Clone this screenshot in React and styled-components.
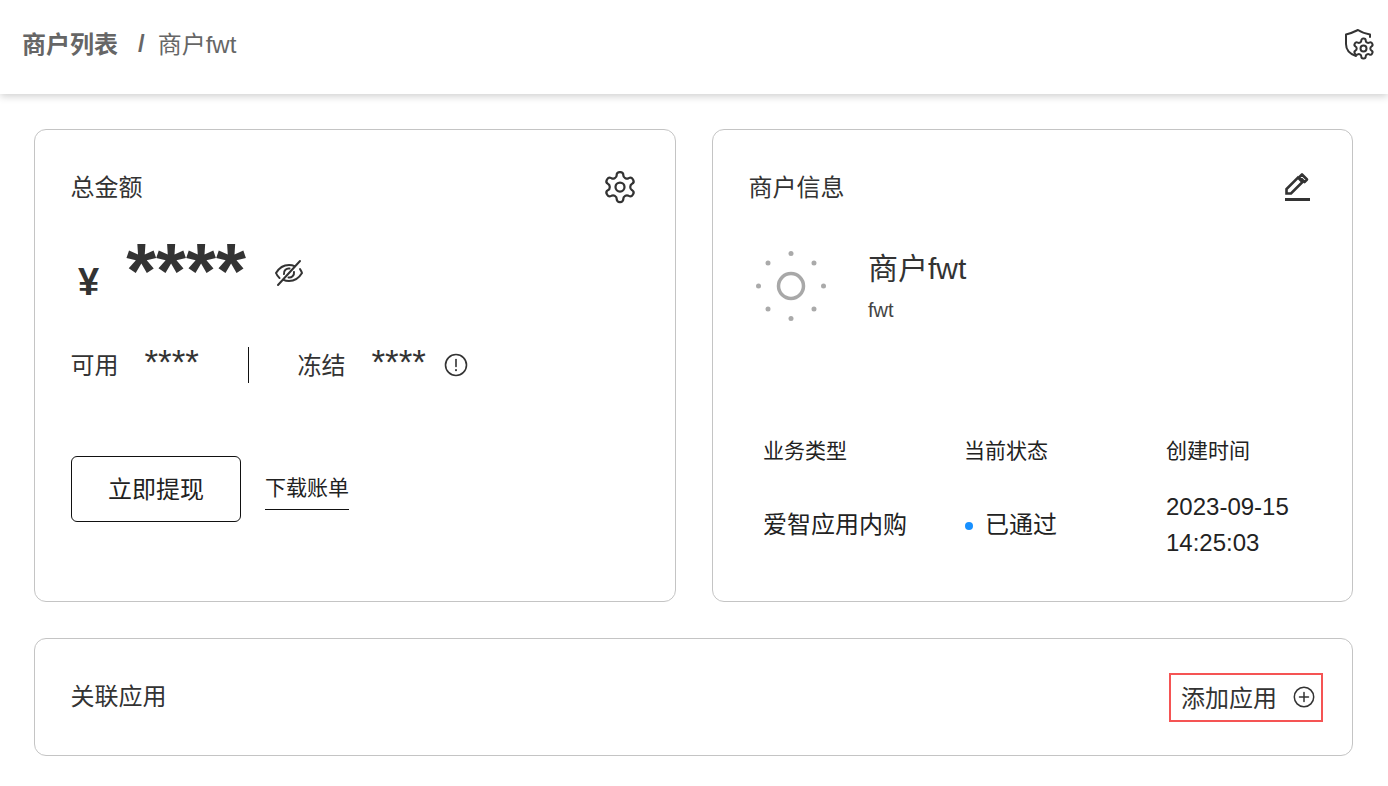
import React from "react";
import styled, { createGlobalStyle } from "styled-components";

const Global = createGlobalStyle`
  html, body { margin: 0; padding: 0; background: #fff; }
  body { font-family: "Liberation Sans", "Noto Sans CJK SC", sans-serif; color: #333; }
  * { box-sizing: border-box; }
`;

const Page = styled.div`
  width: 1388px;
  height: 786px;
  overflow: hidden;
`;

const Header = styled.header`
  height: 94px;
  padding: 0 12px 6px 22px;
  display: flex;
  align-items: center;
  justify-content: space-between;
  background: #fff;
  box-shadow: 0 2px 8px rgba(0, 0, 0, 0.2);
`;

const Crumbs = styled.div`
  display: flex;
  align-items: center;
  margin-bottom: 4px;
  font-size: 24px;
  color: #666;
`;

const CrumbRoot = styled.span`
  font-weight: 700;
`;

const CrumbSep = styled.span`
  margin: 3px 13px 0 20px;
  font-weight: 700;
`;

const Content = styled.main`
  padding: 35px 35px 0 34px;
  display: grid;
  grid-template-columns: 642px 641px;
  grid-template-rows: 473px 118px;
  gap: 36px;
`;

const Card = styled.section`
  border: 1px solid #c4c4c4;
  border-radius: 12px;
  padding: 36px;
  grid-column: ${(p) => (p.$wide ? "1 / 3" : "auto")};
`;

const CardHead = styled.div`
  display: flex;
  align-items: center;
  justify-content: space-between;
  height: 44px;
  margin-right: ${(p) => p.$inset}px;
`;

const CardTitle = styled.h2`
  margin: 0 0 0 -0.5px;
  font-size: 24px;
  font-weight: 400;
  line-height: 44px;
  color: #333;
`;

const HeadIcon = styled.span`
  display: flex;
  margin-bottom: 2px;
`;

const Amount = styled.div`
  display: flex;
  align-items: flex-start;
  height: 88px;
  margin-top: 29px;
  padding-left: 7px;
`;

const Yen = styled.span`
  margin-top: 21px;
  font-size: 38px;
  font-weight: 700;
  line-height: 44px;
  color: #333;
`;

const Stars = styled.span`
  margin: 2px 0 0 27px;
  font-size: 77px;
  font-weight: 700;
  line-height: 60px;
  color: #333;
`;

const EyeButton = styled.span`
  display: flex;
  margin: 18px 0 0 27px;
`;

const Balances = styled.div`
  display: flex;
  align-items: center;
  height: 36px;
  margin-top: 18px;
  margin-left: -0.5px;
  font-size: 24px;
  color: #333;
`;

const BalanceValue = styled.span`
  margin-left: 26px;
  font-size: 35px;
  line-height: 36px;
  position: relative;
  top: -1px;
`;

const BalanceDivider = styled.i`
  width: 1px;
  height: 36px;
  margin: 4px 48px 0 49.5px;
  background: #111;
`;

const InfoIcon = styled.span`
  display: flex;
  margin: 4px 0 0 18px;
`;

const Actions = styled.div`
  display: flex;
  align-items: center;
  margin-top: 75px;
  gap: 24px;
`;

const PrimaryButton = styled.button`
  width: 170px;
  height: 66px;
  padding: 0 0 3px;
  border: 1px solid #111;
  border-radius: 6px;
  background: #fff;
  color: #222;
  font: inherit;
  font-size: 24px;
`;

const TextLink = styled.a`
  display: block;
  padding: 2px 0 4px;
  border-bottom: 1px solid #111;
  font-size: 21px;
  line-height: 34px;
  color: #222;
`;

const Profile = styled.div`
  display: flex;
  margin-top: 38px;
  padding-left: 6px;
`;

const Avatar = styled.div`
  width: 72px;
  height: 72px;
  flex: none;
  margin-top: 2px;
  filter: blur(0.5px);
`;

const ProfileText = styled.div`
  margin: 1px 0 0 41px;
`;

const ProfileName = styled.div`
  font-size: 30px;
  line-height: 40px;
  color: #333;
`;

const ProfileCode = styled.div`
  margin-top: 8px;
  font-size: 20px;
  line-height: 26px;
  color: #444;
`;

const InfoGrid = styled.div`
  display: grid;
  grid-template-columns: 201px 202px 1fr;
  margin-top: 114px;
  padding-left: 14px;
`;

const InfoLabel = styled.div`
  font-size: 21px;
  line-height: 28px;
  color: #222;
`;

const InfoValue = styled.div`
  display: flex;
  align-items: center;
  height: 72px;
  margin-top: 24px;
  font-size: 24px;
  line-height: 36px;
  color: #222;
`;

const Dot = styled.i`
  width: 8px;
  height: 8px;
  margin: 2px 12px 0 1px;
  border-radius: 50%;
  background: #1890ff;
`;

const AddButton = styled.div`
  display: flex;
  align-items: center;
  width: 154px;
  height: 49px;
  margin-right: -7px;
  padding: 0 0 2px 10px;
  border: 2px solid #f55454;
  font-size: 24px;
  color: #333;
`;

const AddIcon = styled.span`
  display: flex;
  margin: 2px 0 0 16px;
`;

const BottomHead = styled.div`
  display: flex;
  align-items: center;
  justify-content: space-between;
  height: 44px;
`;

const GEAR =
  "M12.220 2h-.440a2 2 0 0 0-2 2v.180a2 2 0 0 1-1 1.730l-.430.250a2 2 0 0 1-2 0l-.150-.080a2 2 0 0 0-2.730.730l-.220.380a2 2 0 0 0 .730 2.730l.150.100a2 2 0 0 1 1 1.720v.510a2 2 0 0 1-1 1.740l-.150.090a2 2 0 0 0-.730 2.730l.220.380a2 2 0 0 0 2.730.730l.150-.080a2 2 0 0 1 2 0l.430.250a2 2 0 0 1 1 1.730V20a2 2 0 0 0 2 2h.440a2 2 0 0 0 2-2v-.180a2 2 0 0 1 1-1.730l.430-.250a2 2 0 0 1 2 0l.150.080a2 2 0 0 0 2.730-.730l.220-.390a2 2 0 0 0-.730-2.730l-.150-.080a2 2 0 0 1-1-1.740v-.500a2 2 0 0 1 1-1.740l.150-.090a2 2 0 0 0 .730-2.730l-.220-.380a2 2 0 0 0-2.730-.730l-.150.080a2 2 0 0 1-2 0l-.430-.250a2 2 0 0 1-1-1.730V4a2 2 0 0 0-2-2z";

function ShieldGear() {
  return (
    <svg width="32" height="32" viewBox="0 0 32 32" fill="none" stroke="#333" strokeWidth="2" strokeLinecap="round" strokeLinejoin="round">
      <path d="M12 28C6 26 2 22 2 16V6.500C6 5.500 10 4 14 2c3 2 7 3.500 12 4.500V9" />
      <g transform="translate(7.500 8.500)">
        <path d={GEAR} />
        <circle cx="12" cy="12" r="3" />
      </g>
    </svg>
  );
}

function Gear() {
  return (
    <svg width="36" height="36" viewBox="0 0 24 24" fill="none" stroke="#333" strokeWidth="1.500" strokeLinecap="round" strokeLinejoin="round">
      <path d={GEAR} />
      <circle cx="12" cy="12" r="3" />
    </svg>
  );
}

function Pencil() {
  return (
    <svg width="32" height="32" viewBox="0 0 32 32" fill="none" stroke="#333">
      <path d="M5.500 22.500V18L17 6.500l4.500 4.500L10 22.500z" strokeWidth="2.600" strokeLinejoin="miter" />
      <path d="M21 3.500l5 5-2.500 2.500-5-5z" strokeWidth="2.600" strokeLinejoin="round" />
      <path d="M4 28.500h25" strokeWidth="3" />
    </svg>
  );
}

function EyeOff() {
  return (
    <svg width="32" height="32" viewBox="0 0 32 32" fill="none" stroke="#333" strokeWidth="2" strokeLinecap="round" strokeLinejoin="round">
      <path d="M3 16c3-5 7.500-8 13-8 2 0 4 .400 5.500 1.200M27 12c.800 1.200 1.500 2.500 2 4-3 5-7.500 8-13 8-2 0-4-.400-5.500-1.200M6.500 21c-1.500-1.300-2.700-3-3.500-5" />
      <path d="M11 17c-.500-3.500 2.500-6 5.500-5.500M21 15c.500 3.500-2.500 6-5.500 5.500" />
      <path d="M5 28L27 4" />
    </svg>
  );
}

function Info() {
  return (
    <svg width="24" height="24" viewBox="0 0 24 24" fill="none" stroke="#333" strokeWidth="1.600" strokeLinecap="round">
      <circle cx="12" cy="12" r="10.500" />
      <path d="M12 6.500v7" />
      <path d="M12 17v.300" strokeWidth="2" />
    </svg>
  );
}

function Plus() {
  return (
    <svg width="22" height="22" viewBox="0 0 22 22" fill="none" stroke="#333" strokeWidth="1.500" strokeLinecap="round">
      <circle cx="11" cy="11" r="9.700" />
      <path d="M6.500 11h9M11 6.500v9" />
    </svg>
  );
}

// loading placeholder: ring plus eight dots
function Spinner() {
  const dots = [0, 45, 90, 135, 180, 225, 270, 315];
  return (
    <svg width="72" height="72" viewBox="0 0 72 72">
      <circle cx="36" cy="36" r="12.500" fill="none" stroke="#a8a8a8" strokeWidth="3.500" />
      {dots.map((d) => (
        <circle
          key={d}
          cx={36 + 32.500 * Math.cos((d * Math.PI) / 180)}
          cy={36 + 32.500 * Math.sin((d * Math.PI) / 180)}
          r="2.500"
          fill="#aaa"
        />
      ))}
    </svg>
  );
}

export default function App() {
  return (
    <Page>
      <Global />
      <Header>
        <Crumbs>
          <CrumbRoot>商户列表</CrumbRoot>
          <CrumbSep>/</CrumbSep>
          <span>商户fwt</span>
        </Crumbs>
        <ShieldGear />
      </Header>
      <Content>
        <Card>
          <CardHead $inset={1}>
            <CardTitle>总金额</CardTitle>
            <HeadIcon><Gear /></HeadIcon>
          </CardHead>
          <Amount>
            <Yen>¥</Yen>
            <Stars>****</Stars>
            <EyeButton><EyeOff /></EyeButton>
          </Amount>
          <Balances>
            <span>可用</span>
            <BalanceValue>****</BalanceValue>
            <BalanceDivider />
            <span>冻结</span>
            <BalanceValue>****</BalanceValue>
            <InfoIcon><Info /></InfoIcon>
          </Balances>
          <Actions>
            <PrimaryButton>立即提现</PrimaryButton>
            <TextLink>下载账单</TextLink>
          </Actions>
        </Card>
        <Card>
          <CardHead $inset={3}>
            <CardTitle>商户信息</CardTitle>
            <HeadIcon><Pencil /></HeadIcon>
          </CardHead>
          <Profile>
            <Avatar><Spinner /></Avatar>
            <ProfileText>
              <ProfileName>商户fwt</ProfileName>
              <ProfileCode>fwt</ProfileCode>
            </ProfileText>
          </Profile>
          <InfoGrid>
            <div>
              <InfoLabel>业务类型</InfoLabel>
              <InfoValue>爱智应用内购</InfoValue>
            </div>
            <div>
              <InfoLabel>当前状态</InfoLabel>
              <InfoValue><Dot />已通过</InfoValue>
            </div>
            <div>
              <InfoLabel>创建时间</InfoLabel>
              <InfoValue>2023-09-15<br />14:25:03</InfoValue>
            </div>
          </InfoGrid>
        </Card>
        <Card $wide>
          <BottomHead>
            <CardTitle>关联应用</CardTitle>
            <AddButton>
              添加应用
              <AddIcon><Plus /></AddIcon>
            </AddButton>
          </BottomHead>
        </Card>
      </Content>
    </Page>
  );
}
